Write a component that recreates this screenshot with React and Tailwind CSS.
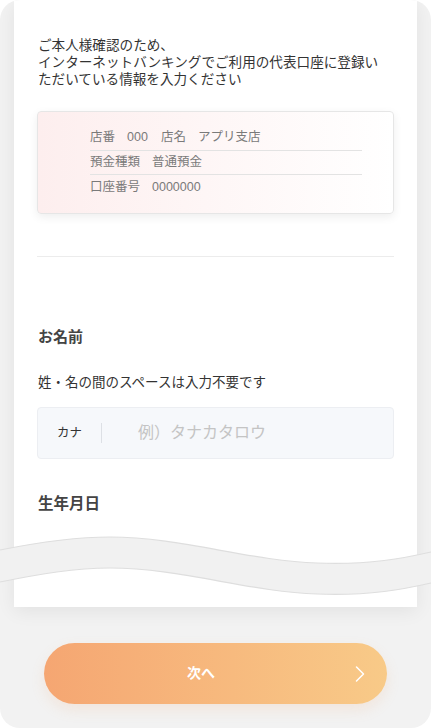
import { ChevronRight } from 'lucide-react';

const accountRows = [
  [['店番', '000'], ['店名', 'アプリ支店']],
  [['預金種類', '普通預金']],
  [['口座番号', '0000000']],
];

function Wave() {
  return (
    <svg
      className="pointer-events-none absolute left-0 top-[530px]"
      width="431"
      height="72"
      viewBox="0 0 431 72"
    >
      <path
        d="M0 20 C 40 12, 75 7, 110 7 C 180 7, 250 31, 317 33 C 370 35, 405 28, 431 22 L 431 53 C 405 59, 370 66, 317 64 C 250 62, 180 38, 110 38 C 75 38, 40 44, 0 52 Z"
        fill="#f1f1f1"
      />
      <path
        d="M0 20 C 40 12, 75 7, 110 7 C 180 7, 250 31, 317 33 C 370 35, 405 28, 431 22"
        fill="none"
        stroke="#dedede"
        strokeWidth="1.2"
      />
      <path
        d="M0 52 C 40 44, 75 38, 110 38 C 180 38, 250 62, 317 64 C 370 66, 405 59, 431 53"
        fill="none"
        stroke="#dedede"
        strokeWidth="1.2"
      />
    </svg>
  );
}

export default function App() {
  return (
    <div className="h-[728px] w-[431px] bg-white font-['Liberation_Sans','Noto_Sans_CJK_JP',sans-serif]">
      <div className="relative flex h-full flex-col overflow-hidden rounded-[20px] bg-[#f2f2f2]">
        <div className="mx-[14px] h-[607px] shrink-0 bg-white px-[23px] pt-[37px] shadow-[0_4px_18px_rgba(0,0,0,0.07)]">
          <p className="pl-px text-[13.6px] leading-[17px] text-[#333]">
            ご本人様確認のため、
            <br />
            インターネットバンキングでご利用の代表口座に登録い
            <br />
            ただいている情報を入力ください
          </p>

          <div className="mt-[23px] h-[103px] rounded-[4px] border border-[#e6e6e6] bg-linear-to-r from-[#fdeeee] to-white pl-[52px] pr-[31px] pt-[14px] shadow-[0_3px_10px_rgba(0,0,0,0.07)]">
            {accountRows.map((row, i) => (
              <div
                key={i}
                className={[
                  'flex h-[24.5px] items-center gap-[13px] text-[12.5px] text-[#7a7a7a]',
                  i < accountRows.length - 1 ? 'border-b border-[#e3e3e3]' : '',
                ].join(' ')}
              >
                {row.map(([label, value]) => (
                  <span key={label} className="flex gap-[12px]">
                    <span>{label}</span>
                    <span>{value}</span>
                  </span>
                ))}
              </div>
            ))}
          </div>

          <div className="mt-[42px] h-px bg-[#ececec]" />

          <h2 className="mt-[71px] pl-px text-[15px] font-bold leading-[18px] text-[#444]">
            お名前
          </h2>
          <p className="mt-[28px] pl-px text-[13.5px] leading-[18px] text-[#333]">
            姓・名の間のスペースは入力不要です
          </p>

          <div className="mt-[15px] flex h-[52px] items-center rounded-[4px] border border-[#eceef2] bg-[#f6f8fb] pl-[19px]">
            <span className="w-[44px] text-[12.4px] text-[#333]">カナ</span>
            <span className="h-[20px] w-px bg-[#dde0e5]" />
            <span className="pl-[36px] text-[16px] text-[#c4c4c4]">例）タナカタロウ</span>
          </div>

          <h2 className="mt-[36px] pl-px text-[15.5px] font-bold leading-[18px] text-[#444]">
            生年月日
          </h2>
        </div>

        <Wave />

        <div className="px-[44px] pt-[36px]">
          <button
            type="button"
            className="relative flex h-[61px] w-full items-center justify-center rounded-full bg-linear-to-r from-[#f5a672] to-[#f8ca88] pr-[29px] text-[14px] font-bold text-white shadow-[0_6px_14px_rgba(240,160,100,0.15)]"
          >
            次へ
            <ChevronRight
              className="absolute right-[13px] top-1/2 h-[28px] w-[28px] -translate-y-1/2"
              strokeWidth={1.3}
            />
          </button>
        </div>
      </div>
    </div>
  );
}
